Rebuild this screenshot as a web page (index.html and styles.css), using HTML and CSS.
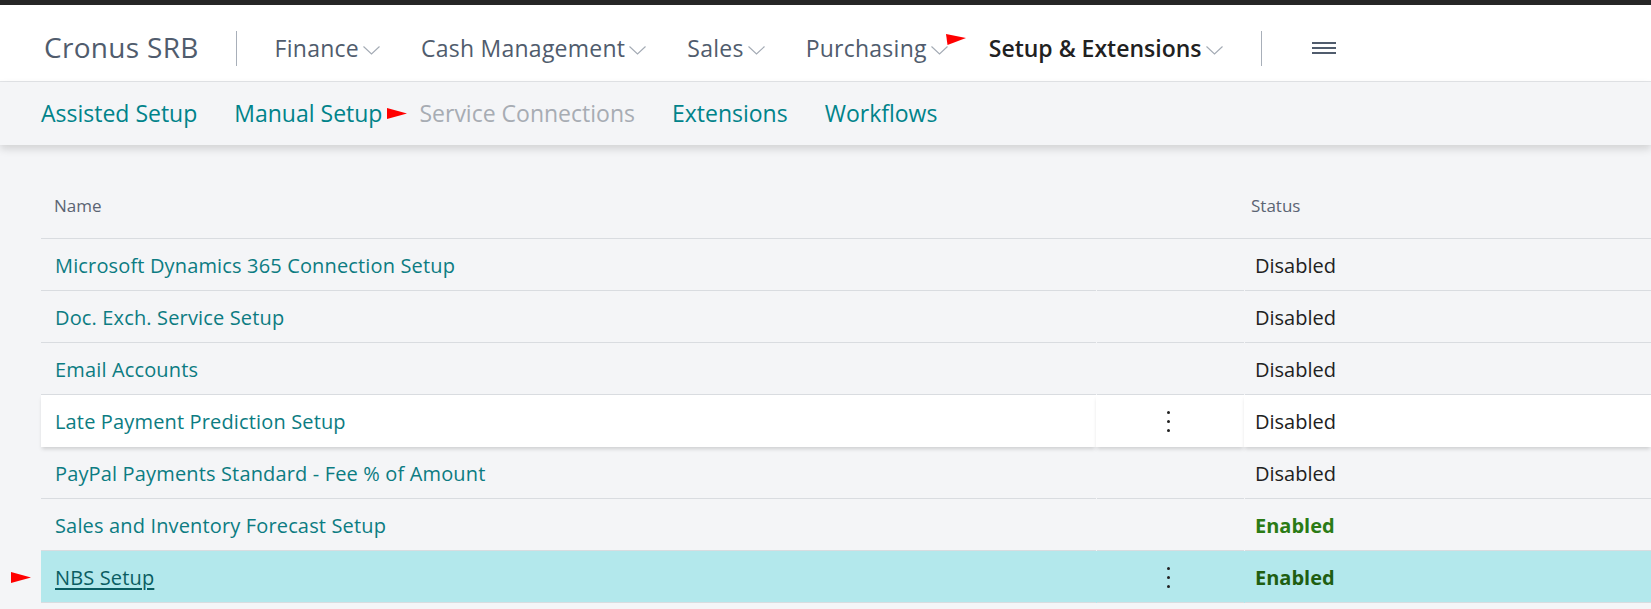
FILE: index.html
```html
<!DOCTYPE html>
<html lang="en">
<head>
<meta charset="utf-8">
<title>Service Connections</title>
<link rel="stylesheet" href="styles.css">
</head>
<body>
<div class="topbar"></div>
<header class="header">
  <div class="brand">Cronus SRB</div>
  <div class="vsep"></div>
  <nav class="nav">
    <div class="nav-item">Finance<svg class="chev" viewBox="0 0 17 9"><path d="M0.5 0.5 L8.5 8 L16.5 0.5"/></svg></div>
    <div class="nav-item">Cash Management<svg class="chev" viewBox="0 0 17 9"><path d="M0.5 0.5 L8.5 8 L16.5 0.5"/></svg></div>
    <div class="nav-item">Sales<svg class="chev" viewBox="0 0 17 9"><path d="M0.5 0.5 L8.5 8 L16.5 0.5"/></svg></div>
    <div class="nav-item">Purchasing<svg class="chev" viewBox="0 0 17 9"><path d="M0.5 0.5 L8.5 8 L16.5 0.5"/></svg><svg class="flag" viewBox="0 0 20 11"><path d="M0 0 L20 4 L1.5 11 Z"/></svg></div>
    <div class="nav-item active">Setup &amp; Extensions<svg class="chev" viewBox="0 0 17 9"><path d="M0.5 0.5 L8.5 8 L16.5 0.5"/></svg></div>
  </nav>
  <div class="vsep vsep2"></div>
  <div class="menu"><span></span><span></span><span></span></div>
</header>
<div class="subnav">
  <a class="sublink">Assisted Setup</a>
  <a class="sublink">Manual Setup<svg class="arrow subarrow" viewBox="0 0 20 11"><path d="M0 0 L20 5.5 L0 11 Z"/></svg></a>
  <a class="sublink current">Service Connections</a>
  <a class="sublink">Extensions</a>
  <a class="sublink">Workflows</a>
</div>
<main class="content">
  <div class="grid">
    <div class="hcell name">Name</div>
    <div class="hcell dots"></div>
    <div class="hcell status">Status</div>

    <div class="row">
      <div class="cell name"><span class="link">Microsoft Dynamics 365 Connection Setup</span></div>
      <div class="cell dots"></div>
      <div class="cell status">Disabled</div>
    </div>
    <div class="row">
      <div class="cell name"><span class="link">Doc. Exch. Service Setup</span></div>
      <div class="cell dots"></div>
      <div class="cell status">Disabled</div>
    </div>
    <div class="row">
      <div class="cell name"><span class="link">Email Accounts</span></div>
      <div class="cell dots"></div>
      <div class="cell status">Disabled</div>
    </div>
    <div class="row hover">
      <div class="cell name"><span class="link">Late Payment Prediction Setup</span></div>
      <div class="cell dots"><span class="kebab"><i></i><i></i><i></i></span></div>
      <div class="cell status">Disabled</div>
    </div>
    <div class="row">
      <div class="cell name"><span class="link">PayPal Payments Standard - Fee % of Amount</span></div>
      <div class="cell dots"></div>
      <div class="cell status">Disabled</div>
    </div>
    <div class="row">
      <div class="cell name"><span class="link">Sales and Inventory Forecast Setup</span></div>
      <div class="cell dots"></div>
      <div class="cell status enabled">Enabled</div>
    </div>
    <div class="row selected">
      <div class="cell name"><svg class="arrow rowarrow" viewBox="0 0 20 11"><path d="M0 0 L20 5.5 L0 11 Z"/></svg><span class="link">NBS Setup</span></div>
      <div class="cell dots"><span class="kebab"><i></i><i></i><i></i></span></div>
      <div class="cell status enabled">Enabled</div>
    </div>
  </div>
</main>
</body>
</html>
```
FILE: styles.css
```css
* { box-sizing: border-box; }
html, body {
  margin: 0;
  padding: 0;
}
body {
  background: #f4f5f7;
  font-family: "Open Sans", "Noto Sans", "Liberation Sans", sans-serif;
  color: #212121;
  overflow: hidden;
}
.topbar {
  height: 5px;
  background: #262626;
}
.header {
  height: 77px;
  background: #ffffff;
  border-bottom: 1px solid #e3e5e8;
  display: flex;
  align-items: center;
  padding-left: 44px;
  padding-top: 10px;
}
.brand {
  font-size: 28px;
  letter-spacing: 0.3px;
  color: #505c6d;
  margin-top: -2px;
}
.vsep {
  width: 1px;
  height: 35px;
  background: #a8afb9;
  margin: 0 38px 0 37px;
}
.nav {
  display: flex;
  align-items: center;
  gap: 41px;
}
.nav-item {
  position: relative;
  display: flex;
  align-items: center;
  font-size: 23px;
  letter-spacing: 0.25px;
  color: #505c6d;
}
.nav-item.active {
  color: #212121;
  font-weight: 600;
  letter-spacing: 0;
}
.chev {
  width: 17px;
  height: 9px;
  margin-left: 4px;
  margin-top: 5px;
  fill: none;
  stroke: #a3aab4;
  stroke-width: 1.1;
}
.flag {
  position: absolute;
  left: 100%;
  margin-left: -2px;
  top: 50%;
  margin-top: -14px;
  width: 20px;
  height: 11px;
  fill: #ff0000;
}
.vsep2 {
  margin: 0 50px 0 38px;
}
.menu {
  display: flex;
  flex-direction: column;
  gap: 3px;
  width: 24px;
}
.menu span {
  display: block;
  height: 2px;
  background: #505c6d;
}
.subnav {
  height: 63px;
  background: #f4f5f7;
  display: flex;
  align-items: center;
  padding-left: 41px;
  gap: 37px;
  box-shadow: 0 4px 8px rgba(0, 0, 0, 0.14);
  position: relative;
  z-index: 2;
}
.sublink {
  position: relative;
  font-size: 23px;
  color: #00838a;
  margin-top: -1px;
}
.sublink.current {
  color: #a7acb3;
}
.arrow {
  width: 20px;
  height: 11px;
  fill: #ff0000;
}
.subarrow {
  position: absolute;
  left: 100%;
  margin-left: 5px;
  top: 50%;
  margin-top: -5px;
}
.content {
  padding-left: 41px;
}
.grid {
  display: grid;
  grid-template-columns: 1055px 148px 1fr;
}
.row {
  display: contents;
}
.hcell {
  height: 94px;
  border-bottom: 1px solid #d9dce0;
  font-size: 17px;
  color: #5b6473;
  padding-top: 49px;
}
.hcell.name { padding-left: 13px; }
.hcell.status { padding-left: 7px; }
.cell {
  height: 52px;
  display: flex;
  align-items: center;
  font-size: 20px;
  position: relative;
}
.cell::after {
  content: "";
  position: absolute;
  left: 0;
  right: 0;
  bottom: 0;
  height: 1px;
  background: #d9dce0;
}
.cell.dots::after,
.cell.status::after {
  left: 1px;
}
.cell.name {
  padding-left: 14px;
}
.cell.status {
  padding-left: 11px;
  color: #212121;
}
.link {
  color: #0c7c82;
  letter-spacing: 0.15px;
}
.cell.status.enabled {
  font-weight: 700;
  color: #2b7b15;
}
.cell.dots {
  justify-content: center;
}
.kebab {
  display: flex;
  flex-direction: column;
  gap: 6px;
  margin-left: -3px;
}
.kebab i {
  display: block;
  width: 3px;
  height: 3px;
  border-radius: 50%;
  background: #212121;
}
.row.hover .cell {
  background: #ffffff;
  box-shadow: 0 3px 4px -1px rgba(0, 0, 0, 0.16);
  z-index: 1;
}
.row.hover .cell::after {
  display: none;
}
.row.selected .cell {
  background: #b3e8ec;
}
.row.selected .link {
  color: #0a5d62;
  text-decoration: underline;
  text-underline-offset: 3px;
}
.row.selected .cell.status.enabled {
  color: #1f5e12;
}
.rowarrow {
  position: absolute;
  left: -30px;
  top: 50%;
  margin-top: -5px;
}
```
